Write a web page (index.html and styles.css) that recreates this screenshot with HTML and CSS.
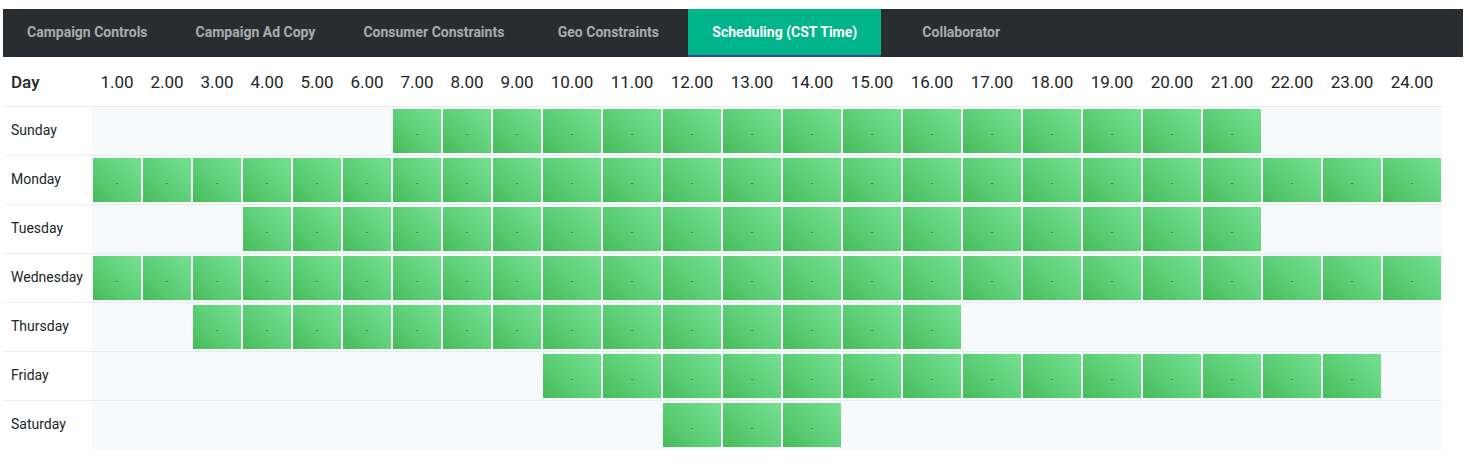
FILE: index.html
```html
<!DOCTYPE html>
<html lang="en">
<head>
<meta charset="utf-8">
<title>Scheduling</title>
<link rel="stylesheet" href="styles.css">
</head>
<body>
<div class="page">
  <nav class="tabs">
    <a class="tab">Campaign Controls</a>
    <a class="tab">Campaign Ad Copy</a>
    <a class="tab">Consumer Constraints</a>
    <a class="tab">Geo Constraints</a>
    <a class="tab active">Scheduling (CST Time)</a>
    <a class="tab">Collaborator</a>
  </nav>
  <div class="schedule">
    <div class="row head">
      <div class="label">Day</div>
      <div class="h">1.00</div><div class="h">2.00</div><div class="h">3.00</div><div class="h">4.00</div><div class="h">5.00</div><div class="h">6.00</div><div class="h">7.00</div><div class="h">8.00</div><div class="h">9.00</div><div class="h">10.00</div><div class="h">11.00</div><div class="h">12.00</div><div class="h">13.00</div><div class="h">14.00</div><div class="h">15.00</div><div class="h">16.00</div><div class="h">17.00</div><div class="h">18.00</div><div class="h">19.00</div><div class="h">20.00</div><div class="h">21.00</div><div class="h">22.00</div><div class="h">23.00</div><div class="h">24.00</div>
    </div>
    <div class="row">
      <div class="label">Sunday</div>
      <div class="s"></div><div class="s"></div><div class="s"></div><div class="s"></div><div class="s"></div><div class="s"></div>
      <div class="s"><span class="on">-</span></div><div class="s"><span class="on">-</span></div><div class="s"><span class="on">-</span></div><div class="s"><span class="on">-</span></div><div class="s"><span class="on">-</span></div><div class="s"><span class="on">-</span></div><div class="s"><span class="on">-</span></div><div class="s"><span class="on">-</span></div><div class="s"><span class="on">-</span></div><div class="s"><span class="on">-</span></div><div class="s"><span class="on">-</span></div><div class="s"><span class="on">-</span></div><div class="s"><span class="on">-</span></div><div class="s"><span class="on">-</span></div><div class="s"><span class="on">-</span></div>
      <div class="s"></div><div class="s"></div><div class="s"></div>
    </div>
    <div class="row">
      <div class="label">Monday</div>
      <div class="s"><span class="on">-</span></div><div class="s"><span class="on">-</span></div><div class="s"><span class="on">-</span></div><div class="s"><span class="on">-</span></div><div class="s"><span class="on">-</span></div><div class="s"><span class="on">-</span></div><div class="s"><span class="on">-</span></div><div class="s"><span class="on">-</span></div><div class="s"><span class="on">-</span></div><div class="s"><span class="on">-</span></div><div class="s"><span class="on">-</span></div><div class="s"><span class="on">-</span></div><div class="s"><span class="on">-</span></div><div class="s"><span class="on">-</span></div><div class="s"><span class="on">-</span></div><div class="s"><span class="on">-</span></div><div class="s"><span class="on">-</span></div><div class="s"><span class="on">-</span></div><div class="s"><span class="on">-</span></div><div class="s"><span class="on">-</span></div><div class="s"><span class="on">-</span></div><div class="s"><span class="on">-</span></div><div class="s"><span class="on">-</span></div><div class="s"><span class="on">-</span></div>
    </div>
    <div class="row">
      <div class="label">Tuesday</div>
      <div class="s"></div><div class="s"></div><div class="s"></div>
      <div class="s"><span class="on">-</span></div><div class="s"><span class="on">-</span></div><div class="s"><span class="on">-</span></div><div class="s"><span class="on">-</span></div><div class="s"><span class="on">-</span></div><div class="s"><span class="on">-</span></div><div class="s"><span class="on">-</span></div><div class="s"><span class="on">-</span></div><div class="s"><span class="on">-</span></div><div class="s"><span class="on">-</span></div><div class="s"><span class="on">-</span></div><div class="s"><span class="on">-</span></div><div class="s"><span class="on">-</span></div><div class="s"><span class="on">-</span></div><div class="s"><span class="on">-</span></div><div class="s"><span class="on">-</span></div><div class="s"><span class="on">-</span></div><div class="s"><span class="on">-</span></div>
      <div class="s"></div><div class="s"></div><div class="s"></div>
    </div>
    <div class="row">
      <div class="label">Wednesday</div>
      <div class="s"><span class="on">-</span></div><div class="s"><span class="on">-</span></div><div class="s"><span class="on">-</span></div><div class="s"><span class="on">-</span></div><div class="s"><span class="on">-</span></div><div class="s"><span class="on">-</span></div><div class="s"><span class="on">-</span></div><div class="s"><span class="on">-</span></div><div class="s"><span class="on">-</span></div><div class="s"><span class="on">-</span></div><div class="s"><span class="on">-</span></div><div class="s"><span class="on">-</span></div><div class="s"><span class="on">-</span></div><div class="s"><span class="on">-</span></div><div class="s"><span class="on">-</span></div><div class="s"><span class="on">-</span></div><div class="s"><span class="on">-</span></div><div class="s"><span class="on">-</span></div><div class="s"><span class="on">-</span></div><div class="s"><span class="on">-</span></div><div class="s"><span class="on">-</span></div><div class="s"><span class="on">-</span></div><div class="s"><span class="on">-</span></div><div class="s"><span class="on">-</span></div>
    </div>
    <div class="row">
      <div class="label">Thursday</div>
      <div class="s"></div><div class="s"></div>
      <div class="s"><span class="on">-</span></div><div class="s"><span class="on">-</span></div><div class="s"><span class="on">-</span></div><div class="s"><span class="on">-</span></div><div class="s"><span class="on">-</span></div><div class="s"><span class="on">-</span></div><div class="s"><span class="on">-</span></div><div class="s"><span class="on">-</span></div><div class="s"><span class="on">-</span></div><div class="s"><span class="on">-</span></div><div class="s"><span class="on">-</span></div><div class="s"><span class="on">-</span></div><div class="s"><span class="on">-</span></div><div class="s"><span class="on">-</span></div>
      <div class="s"></div><div class="s"></div><div class="s"></div><div class="s"></div><div class="s"></div><div class="s"></div><div class="s"></div><div class="s"></div>
    </div>
    <div class="row">
      <div class="label">Friday</div>
      <div class="s"></div><div class="s"></div><div class="s"></div><div class="s"></div><div class="s"></div><div class="s"></div><div class="s"></div><div class="s"></div><div class="s"></div>
      <div class="s"><span class="on">-</span></div><div class="s"><span class="on">-</span></div><div class="s"><span class="on">-</span></div><div class="s"><span class="on">-</span></div><div class="s"><span class="on">-</span></div><div class="s"><span class="on">-</span></div><div class="s"><span class="on">-</span></div><div class="s"><span class="on">-</span></div><div class="s"><span class="on">-</span></div><div class="s"><span class="on">-</span></div><div class="s"><span class="on">-</span></div><div class="s"><span class="on">-</span></div><div class="s"><span class="on">-</span></div><div class="s"><span class="on">-</span></div>
      <div class="s"></div>
    </div>
    <div class="row">
      <div class="label">Saturday</div>
      <div class="s"></div><div class="s"></div><div class="s"></div><div class="s"></div><div class="s"></div><div class="s"></div><div class="s"></div><div class="s"></div><div class="s"></div><div class="s"></div><div class="s"></div>
      <div class="s"><span class="on">-</span></div><div class="s"><span class="on">-</span></div><div class="s"><span class="on">-</span></div>
      <div class="s"></div><div class="s"></div><div class="s"></div><div class="s"></div><div class="s"></div><div class="s"></div><div class="s"></div><div class="s"></div><div class="s"></div><div class="s"></div>
    </div>
  </div>
</div>
</body>
</html>
```

FILE: styles.css
```css
* { box-sizing: border-box; }
html, body { margin: 0; padding: 0; background: #ffffff; }
body {
  font-family: Roboto, "Liberation Sans", sans-serif;
  color: #212529;
}
.page {
  padding: 9px 6px 0 3px;
}
.tabs {
  display: flex;
  height: 48px;
  background: #292d30;
}
.tab {
  display: flex;
  align-items: center;
  justify-content: center;
  min-width: 160px;
  padding: 0 24px 2px;
  font-size: 14px;
  font-weight: 700;
  color: #a9acae;
  white-space: nowrap;
}
.tab.active {
  background: #00b58b;
  color: #ffffff;
  border-bottom: 2px solid #3d3fa8;
  padding-bottom: 0;
}
.schedule {
  width: 1439px;
}
.row {
  display: grid;
  grid-template-columns: 89px repeat(9, 50px) repeat(15, 60px);
  height: 49px;
  border-top: 1px solid #e8ecee;
}
.row.head {
  border-top: 0;
}
.label {
  display: flex;
  align-items: center;
  padding: 0 0 2px 8px;
  font-size: 14px;
}
.head .label {
  font-size: 17px;
  font-weight: 500;
  padding: 1px 0 0 8px;
}
.h {
  display: flex;
  align-items: center;
  justify-content: center;
  font-size: 17px;
  padding-top: 1px;
}
.s {
  background: #f7fafb;
  padding: 2px 1px 2px 1px;
}
.on {
  display: block;
  height: 44px;
  background: linear-gradient(45deg, #47bb5a 0%, #5fd07a 50%, #74e090 100%);
  color: #2f6b3c;
  font-size: 9px;
  line-height: 44px;
  text-align: center;
  padding-top: 3px;
}
```
